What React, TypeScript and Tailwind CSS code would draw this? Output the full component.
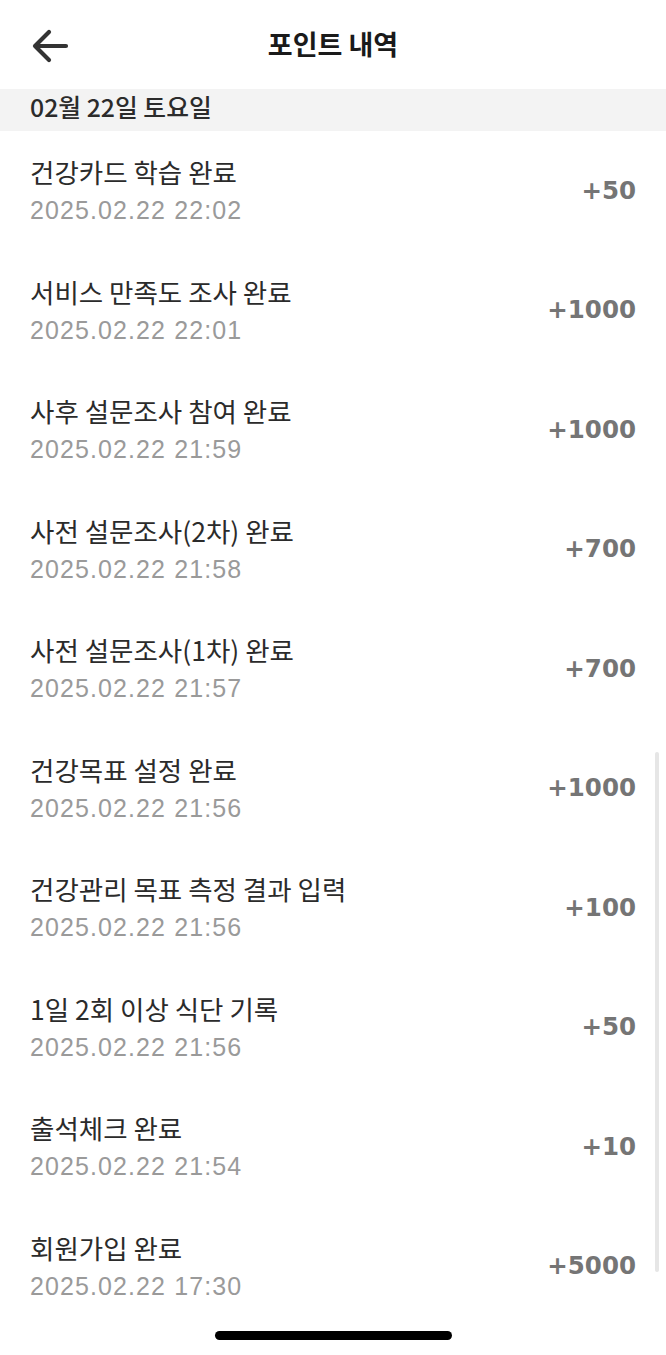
import type { FC } from 'react';

interface PointItem {
  title: string;
  time: string;
  points: string;
}

const items: PointItem[] = [
  { title: '건강카드 학습 완료', time: '2025.02.22 22:02', points: '+50' },
  { title: '서비스 만족도 조사 완료', time: '2025.02.22 22:01', points: '+1000' },
  { title: '사후 설문조사 참여 완료', time: '2025.02.22 21:59', points: '+1000' },
  { title: '사전 설문조사(2차) 완료', time: '2025.02.22 21:58', points: '+700' },
  { title: '사전 설문조사(1차) 완료', time: '2025.02.22 21:57', points: '+700' },
  { title: '건강목표 설정 완료', time: '2025.02.22 21:56', points: '+1000' },
  { title: '건강관리 목표 측정 결과 입력', time: '2025.02.22 21:56', points: '+100' },
  { title: '1일 2회 이상 식단 기록', time: '2025.02.22 21:56', points: '+50' },
  { title: '출석체크 완료', time: '2025.02.22 21:54', points: '+10' },
  { title: '회원가입 완료', time: '2025.02.22 17:30', points: '+5000' },
];

const kr = { fontFamily: '"Noto Sans CJK KR", "Noto Sans", sans-serif' };
const num = { fontFamily: '"Liberation Sans", Arial, sans-serif' };
const pts = { fontFamily: '"DejaVu Sans", Verdana, sans-serif' };

const PointRow: FC<{ item: PointItem }> = ({ item }) => (
  <div className="flex h-[119.5px] items-center justify-between pl-[30px] pr-[30px]">
    <div className="flex flex-col">
      <span className="text-[26.5px] leading-[34px] text-[#2b2b2b]" style={kr}>
        {item.title}
      </span>
      <span className="mt-[5px] text-[25px] leading-[32px] tracking-[1.1px] text-[#9a9a9a]" style={num}>
        {item.time}
      </span>
    </div>
    <span className="text-[24.5px] font-bold leading-[32px] text-[#757575]" style={pts}>
      {item.points}
    </span>
  </div>
);

const App: FC = () => {
  return (
    <div className="relative h-[1355px] w-[666px] overflow-hidden bg-white" style={kr}>
      {/* Header */}
      <div className="relative flex h-[89px] items-center justify-center">
        <button type="button" className="absolute left-[30px] top-[27px] text-[#333]">
          <svg width="40" height="38" viewBox="0 0 40 38" fill="none">
            <path d="M36 19H5M19 5L5 19l14 14" stroke="currentColor" strokeWidth="4.2" strokeLinecap="round" strokeLinejoin="round" />
          </svg>
        </button>
        <h1 className="text-[27px] font-bold text-[#1a1a1a]" style={kr}>
          포인트 내역
        </h1>
      </div>

      {/* Date band */}
      <div className="flex h-[42px] items-center bg-[#f3f3f3] pb-[8px] pl-[30px]">
        <span className="text-[24.8px] font-medium leading-[30px] text-[#2b2b2b]" style={kr}>
          02월 22일 토요일
        </span>
      </div>

      {/* List */}
      <div className="flex flex-col">
        {items.map((item, i) => (
          <PointRow key={i} item={item} />
        ))}
      </div>

      {/* scrollbar */}
      <div className="absolute left-[655px] top-[752px] h-[520px] w-[4px] rounded-full bg-[#e6e6e6]" />

      {/* home indicator */}
      <div className="absolute bottom-[15px] left-[215px] h-[9px] w-[237px] rounded-full bg-black" />
    </div>
  );
};

export default App;
